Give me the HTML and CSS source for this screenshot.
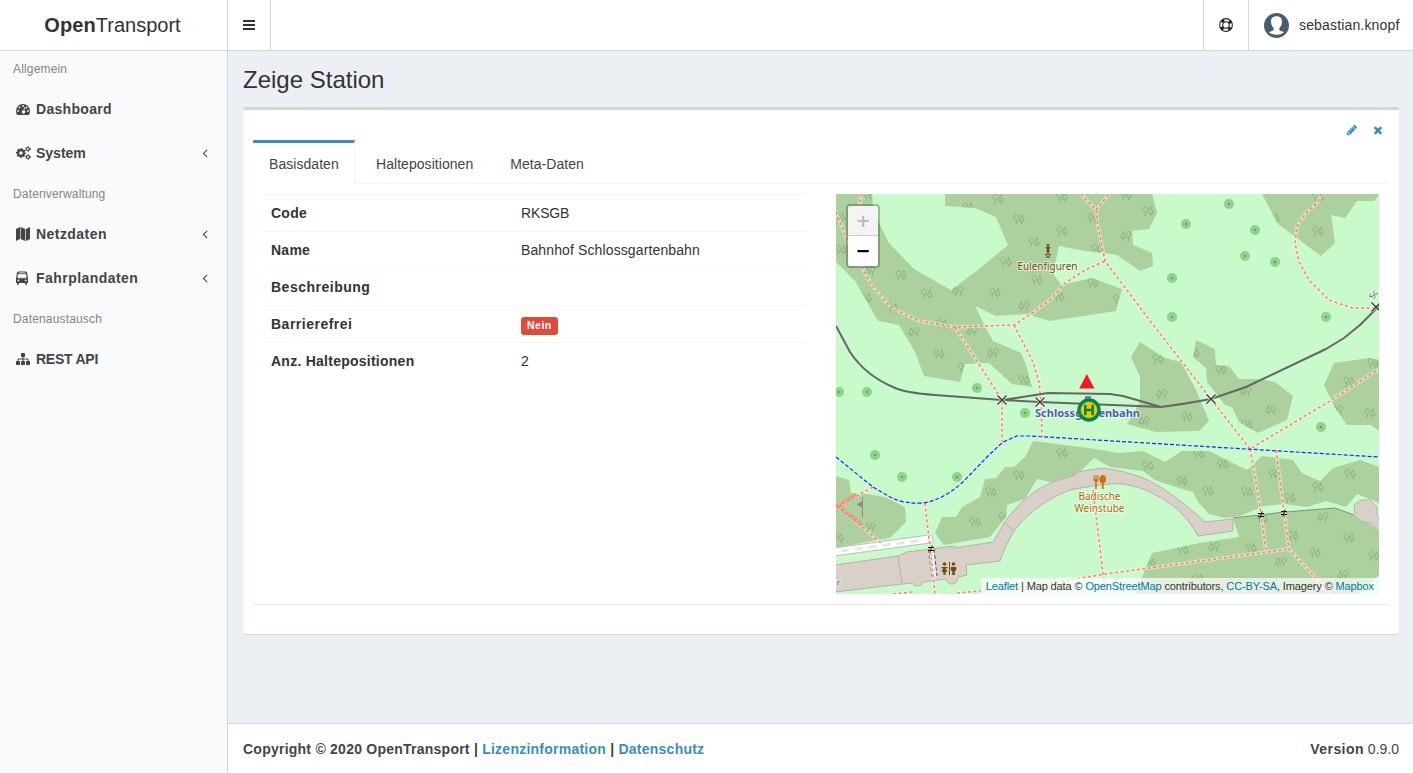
FILE: index.html
```html
<!DOCTYPE html>
<html lang="de">
<head>
<meta charset="utf-8">
<title>OpenTransport</title>
<link rel="stylesheet" href="styles.css">
</head>
<body>
<svg width="0" height="0" class="sprite">
  <defs>
    <symbol id="i-angle" viewBox="0 0 1792 1792"><path d="M1203 544q0 13-10 23l-393 393 393 393q10 10 10 23t-10 23l-50 50q-10 10-23 10t-23-10l-466-466q-10-10-10-23t10-23l466-466q10-10 23-10t23 10l50 50q10 10 10 23z"/></symbol>
    <symbol id="i-times" viewBox="0 0 1792 1792"><path d="M1490 1322q0 40-28 68l-136 136q-28 28-68 28t-68-28l-294-294-294 294q-28 28-68 28t-68-28l-136-136q-28-28-28-68t28-68l294-294-294-294q-28-28-28-68t28-68l136-136q28-28 68-28t68 28l294 294 294-294q28-28 68-28t68 28l136 136q28 28 28 68t-28 68l-294 294 294 294q28 28 28 68z"/></symbol>
    <symbol id="i-pencil" viewBox="0 0 1792 1792"><path d="M491 1536l91-91-235-235-91 91v107h128v128h107zm523-928q0-22-22-22-10 0-17 7l-542 542q-7 7-7 17 0 22 22 22 10 0 17-7l542-542q7-7 7-17zm-54-192l416 416-832 832h-416v-416zm683 96q0 53-37 90l-166 166-416-416 166-165q36-38 90-38 53 0 91 38l235 234q37 39 37 91z"/></symbol>
    <symbol id="i-sitemap" viewBox="0 0 1792 1792"><path d="M1792 1248v320q0 40-28 68t-68 28h-320q-40 0-68-28t-28-68v-320q0-40 28-68t68-28h96v-192h-512v192h96q40 0 68 28t28 68v320q0 40-28 68t-68 28h-320q-40 0-68-28t-28-68v-320q0-40 28-68t68-28h96v-192h-512v192h96q40 0 68 28t28 68v320q0 40-28 68t-68 28h-320q-40 0-68-28t-28-68v-320q0-40 28-68t68-28h96v-192q0-52 38-90t90-38h512v-192h-96q-40 0-68-28t-28-68v-320q0-40 28-68t68-28h320q40 0 68 28t28 68v320q0 40-28 68t-68 28h-96v192h512q52 0 90 38t38 90v192h96q40 0 68 28t28 68z"/></symbol>
    <symbol id="tA" viewBox="0 0 11 10"><path d="M3 5.8C.2 5.8.2 1 3 1s2.800 4.800 0 4.800V9.500M8 1L5.700 7h4.600zM8 7v2.500" fill="none" stroke="#8bb27d" stroke-width=".9"/></symbol>
    <symbol id="tB" viewBox="0 0 11 10"><path d="M8 5.800C5.200 5.800 5.200 1 8 1s2.800 4.800 0 4.800V9.500M3 1L.7 7h4.600zM3 7v2.500" fill="none" stroke="#8bb27d" stroke-width=".9"/></symbol>
  </defs>
</svg>
<header class="top">
  <div class="logo"><span><b>Open</b>Transport</span></div>
  <div class="toggle"><svg width="12" height="12" viewBox="0 0 12 12"><path d="M0 2h12M0 6h12M0 10h12" stroke="#333" stroke-width="2"/></svg></div>
  <div class="grow"></div>
  <div class="help"><svg width="14" height="14" viewBox="0 0 14 14" fill="none" stroke="#222"><circle cx="7" cy="7" r="6.400" stroke-width="1.100"/><circle cx="7" cy="7" r="3.300" stroke-width="1.100"/><circle cx="7" cy="7" r="4.900" stroke-width="3" stroke-dasharray="2.800 4.900" stroke-dashoffset="-2.450"/></svg></div>
  <div class="user">
    <svg width="25" height="25" viewBox="0 0 25 25"><circle cx="12.500" cy="12.500" r="12.500" fill="#4c5b72"/><path d="M12.500 3.200c3.900 0 5.600 2.400 5.500 5.500-.1 2.700-1 4.500-2.700 6.300v2c.8 1 3.300 1.300 4.700 2.200-1.900 1.700-4.500 2.500-7.500 2.500S6.900 20.900 5 19.200c1.400-.9 3.900-1.200 4.700-2.200v-2C8 13.200 7.100 11.400 7 8.700c-.1-3.100 1.600-5.500 5.500-5.500z" fill="#fff"/></svg>
    <span>sebastian.knopf</span>
  </div>
</header>
<div class="body">
  <aside class="side">
    <div class="head">Allgemein</div>
    <a class="item"><svg width="14" height="14" viewBox="0 0 14 14"><path d="M7 2a7 7 0 0 1 7 7c0 1.400-.4 2.700-1 3.700-.2.300-.4.300-.6.300H1.600c-.2 0-.4 0-.6-.3-.6-1-1-2.300-1-3.700a7 7 0 0 1 7-7z" fill="#444"/><g fill="#f9fafc"><circle cx="2" cy="9" r=".9"/><circle cx="3.500" cy="5.500" r=".9"/><circle cx="7" cy="4" r=".9"/><circle cx="10.500" cy="5.500" r=".9"/><circle cx="12" cy="9" r=".9"/><path d="M8.300 5.200l.8.200-.8 3.200a1.600 1.600 0 1 1-.9-.2z"/></g></svg><span>Dashboard</span></a>
    <a class="item"><svg width="15" height="14" viewBox="0 0 15 14" fill="none" stroke="#444"><circle cx="5" cy="7" r="2.900" stroke-width="2.200"/><circle cx="5" cy="7" r="4.300" stroke-width="1.500" stroke-dasharray="1.700 1.677" stroke-dashoffset=".85"/><circle cx="12" cy="3" r="1.500" stroke-width="1.200"/><circle cx="12" cy="3" r="2.400" stroke-width="1" stroke-dasharray="1.100 1.413"/><circle cx="12" cy="11" r="1.500" stroke-width="1.200"/><circle cx="12" cy="11" r="2.400" stroke-width="1" stroke-dasharray="1.100 1.413"/></svg><span class="tight">System</span><svg class="ang" width="14" height="14"><use href="#i-angle"/></svg></a>
    <div class="head">Datenverwaltung</div>
    <a class="item"><svg width="14" height="14" viewBox="0 0 14 14" fill="#444"><path d="M0 2L4 0v12L0 14zM4.600 0L9.300 2v12l-4.700-2zM10 2l4-2v12l-4 2z"/></svg><span class="wide">Netzdaten</span><svg class="ang" width="14" height="14"><use href="#i-angle"/></svg></a>
    <a class="item"><svg width="14" height="14" viewBox="0 0 14 14"><path d="M3 .5h6c1.300 0 2 .5 2.200 1.700L11.500 5l.5 2v5h-1v1.200c0 1-1.800 1-1.800 0V12H2.800v1.200c0 1-1.800 1-1.800 0V12H0V7l.5-2 .3-2.800C1 1 1.700.5 3 .5z" fill="#444"/><path d="M3 1.700h6M2.200 3.200h7.600l.4 3.600H1.800z" fill="#f9fafc" stroke="#f9fafc" stroke-width=".7"/><circle cx="2.400" cy="9.400" r=".9" fill="#f9fafc"/><circle cx="9.600" cy="9.400" r=".9" fill="#f9fafc"/></svg><span class="wide">Fahrplandaten</span><svg class="ang" width="14" height="14"><use href="#i-angle"/></svg></a>
    <div class="head">Datenaustausch</div>
    <a class="item"><svg width="14" height="14" fill="#444"><use href="#i-sitemap"/></svg><span class="narrow">REST API</span></a>
  </aside>
  <main class="main">
    <h1>Zeige Station</h1>
    <section class="box">
      <div class="tools"><svg width="12" height="12"><use href="#i-pencil"/></svg><svg width="12" height="12"><use href="#i-times"/></svg></div>
      <nav class="tabs"><a class="on">Basisdaten</a><a class="t2">Haltepositionen</a><a class="t3">Meta-Daten</a></nav>
      <div class="pane">
        <dl class="tbl">
          <div><dt>Code</dt><dd class="code">RKSGB</dd></div>
          <div><dt>Name</dt><dd>Bahnhof Schlossgartenbahn</dd></div>
          <div><dt class="wide">Beschreibung</dt><dd></dd></div>
          <div><dt class="wide">Barrierefrei</dt><dd><span class="label">Nein</span></dd></div>
          <div><dt>Anz. Haltepositionen</dt><dd>2</dd></div>
        </dl>
        <div class="map">
<svg width="543" height="400" viewBox="836 194 543 400">
  <defs>
    <path id="forest" d="M836 194H872L873 207 878 221 889 243 914 269 951 290 978 270 1008 245 996 217 975 208 945 206V194H1152L1157 213 1149 229 1132 231 1133 245 1152 253 1153 266 1140 271 1117 255 1104 253 1085 251 1059 246 1053 273 1061 285 1092 278 1122 289 1116 311 1050 321 1026 314 996 316 975 306 986 328 993 341 1021 353 1026 365 1032 387 1012 384 989 363 965 364 960 382 924 376 915 352 899 325 878 321 855 281 836 262Z
    M1262 194L1278 224 1321 256 1335 243 1331 215 1345 218 1357 201H1374L1379 195V194Z
    M1140 342L1131 357 1140 377V402L1127 424 1156 432 1199 431 1209 421 1196 390 1181 362 1165 358Z
    M1196 340L1193 357 1206 368 1207 382 1225 405 1232 407 1239 422 1258 433 1287 420 1293 396 1275 382 1258 379 1239 379 1229 366 1216 365 1215 349Z
    M1334 363L1369 358 1379 360V431L1371 425H1347L1335 408 1324 385Z
    M1033 441L1088 448 1119 453 1143 451 1165 462 1182 451H1209L1221 457 1247 470 1262 456 1293 460 1302 473 1320 481 1333 468 1360 460 1379 467V503L1357 494 1346 507 1326 501 1307 507 1285 504 1264 506 1240 516 1225 518 1209 514 1198 502 1193 492 1179 488 1155 480 1143 471 1110 467 1094 458 1085 467 1070 480 1050 482 1037 479 1025 499 1007 505 1006 517 990 537 944 545 935 533 942 517H956L962 507 980 497 985 479 996 478 1005 467H1014L1025 457Z
    M1233 518L1285 512 1335 508 1354 515 1379 530V575L1360 594H1135L1145 570 1152 553 1200 543 1239 537Z
    M836 476L849 480 851 493 867 494 885 497 905 507 906 522 890 538 872 541 836 548Z"/>
    <clipPath id="fc"><use href="#forest"/></clipPath>
    <g id="x"><path d="M-4.500-4.500l9 9M4.500-4.500l-9 9" stroke="#fff" stroke-opacity=".7" stroke-width="3"/><path d="M-4.500-4.500l9 9M4.500-4.500l-9 9" stroke="#333" stroke-width="1.300"/></g>
    <g id="gate"><path d="M-3-1.500h6M-3 1.500h6M1.200-3.500l-2.400 7" stroke="#111" stroke-width="1"/></g>
    <g id="c"><circle r="5" fill="#8ad58b"/><circle r="1" fill="#b06a30"/></g>
    <path id="foot" d="M836 212L847 240 862 267 871 284 890 307 919 321 955 327 1014 325 1031 314 1050 300 1064 284 1085 270 1105 261M862 194L859 206M1081 194L1096 210 1109 194M1096 210L1098 226 1105 261 1154 326 1211 399 1250 449 1330 401 1379 369M1250 449L1253 465 1261 514 1266 551M1276 450L1278 465 1284 512 1289 549 1330 594M957 593L1040 585 1105 574 1289 549M1093 490L1103 574 1106 594M955 327L1002 400V442M1014 325L1033 362 1039 382 1041 403 1042 436M1321 194L1318 202 1305 214 1297 226 1295 243 1299 262 1309 280 1329 300 1352 308H1379M873 487L838 506 881 543M925 503L930 547 935 594M893 594L913 592"/>
  </defs>
  <rect x="836" y="194" width="543" height="400" fill="#c8facc"/>
  <use href="#forest" fill="#add19e"/>
  <g clip-path="url(#fc)" id="trees"></g>
  <path d="M1233 518L1285 512 1335 508 1354 515" fill="none" stroke="#7d9374"/>
  <g fill="#d9d0c9" stroke="#bfada3" stroke-width="1">
    <path d="M835 565L898 556 907 552 954 546 955 548 993 542Q998 534 1004 523 1017 504 1037 490 1052 481 1075 475L1077 472 1102 468Q1128 471 1148 480 1175 494 1205 522L1233 519V531L1198 536Q1186 515 1172 505 1148 488 1128 485 1116 481 1070 490 1046 498 1023 520L1014 531Q1004 549 1000 561L966 565 967 575 958 577A6 6 0 0 1 946 579L923 582A6 6 0 0 1 912 583L902 584 835 592Z"/>
    <path d="M898 556L902 583M1004 523L1014 531" fill="none"/>
    <path d="M1361 500H1370L1377 507V515L1381 520V534L1370 523 1362 522 1355 516 1354 505Z"/>
  </g>
  <path d="M834 552L929 539" stroke="#bbb" stroke-width="9" stroke-linecap="round"/><path d="M834 552L929 539" stroke="#fff" stroke-width="7" stroke-linecap="round"/><path d="M841 551L925 540" stroke="#e6e6e6" stroke-width="3" stroke-dasharray="8 6"/>
  <path d="M931 548L934 577" stroke="#f2eeea" stroke-width="5"/>
  <path d="M928.500 549L932 577M934 549L937 576" stroke="#555" stroke-dasharray="4 2"/>
  <g fill="none" stroke-linejoin="round"><use href="#foot" stroke="#f5f0ea" stroke-opacity=".55" stroke-width="3.500"/><use href="#foot" stroke="#fa8072" stroke-width="1.500" stroke-dasharray="3 2.500"/>
  <path d="M856 495L838 506 862 525" stroke="#fa8072" stroke-width="4" stroke-dasharray="1.500 1"/>
  <path d="M836 457L873 487 890 497Q903 504 923 503 943 500 963 482L988 456 1003 442 1017 436H1030L1379 457" stroke="#2323ff" stroke-width="1.200" stroke-dasharray="4 2"/>
  <path d="M836 326L850 352Q865 375 893 387 905 393 935 395L1002 400 1040 402 1161 407Q1185 404 1211 399L1246 387 1326 349 1344 338 1360 325 1379 306M1002 400L1016 398 1048 393 1110 394 1123 396 1161 407" stroke="#666" stroke-width="2"/></g>
  <use href="#x" x="1002" y="400"/><use href="#x" x="1040" y="402"/><use href="#x" x="1211" y="399"/><use href="#x" x="1376" y="307"/>
  <use href="#gate" x="1261" y="515"/><use href="#gate" x="1284" y="513"/><use href="#gate" x="931" y="549"/>
  <g id="circles"></g>
  <path d="M862.500 497v20" stroke="#8d8c91"/><path d="M862.500 501v7l-6-3.500z" fill="#8d8c91"/>
  <g class="maplabel">
    <text x="1047.500" y="270" textLength="60" fill="#734a08">Eulenfiguren</text>
    <text x="1099.500" y="500" textLength="42" fill="#b46700">Badische</text>
    <text x="1099.500" y="512" textLength="50" fill="#b46700">Weinstube</text>
    <text x="1087.500" y="417" textLength="105" lengthAdjust="spacingAndGlyphs" class="stn" fill="#4d5db0">Schlossgartenbahn</text>
    <text x="1376" y="296" transform="rotate(-60 1376 296)" fill="#555" class="street">Sc</text>
    <text x="838.500" y="586" fill="#555" class="street">r</text>
  </g>
  <g fill="#734a08"><circle cx="1048" cy="245.300" r="1.400"/><path d="M1045.700 247h4.600v1.200h-1v5h-2.600v-5h-1zM1044.800 254h6.400v1.300h-6.400zM1046 256.500h4v1.200h-4z"/>
  <circle cx="944.500" cy="564" r="1.800"/><path d="M941.500 567h6v1.300h-2l2 3.500h-2v3h-2.200v-3h-2l2-3.500h-1.800zM949 562h1v13h-1z"/><circle cx="953.500" cy="564" r="1.800"/><path d="M950.800 567h5.500v3l-1.500 1v4h-2.500v-4l-1.500-1z"/></g>
  <g fill="#c77400"><path d="M1093.500 475v4.500q0 2 1.700 2.200V489h1.600v-7.300q1.700-.2 1.700-2.200V475h-1v4h-1v-4h-1v4h-1v-4zM1102.800 475c4.200 0 4.200 8 .8 8.300V489h-1.700v-5.700c-3.400-.3-3.300-8.300.9-8.300z"/></g>
  <rect x="1085" y="396" width="6" height="6" fill="#7981b0"/>
  <path d="M1086.800 374L1094.500 388.500H1079.200z" fill="#ee1d23"/>
  <circle cx="1089" cy="410" r="10" fill="#f2c500" stroke="#008556" stroke-width="3.400"/>
  <path d="M1085.300 404.800v10.400M1092.700 404.800v10.400M1085.300 410h7.400" stroke="#008556" stroke-width="2.500"/>
</svg>
          <div class="zoom"><span class="in">+</span><span>−</span></div>
          <div class="attr"><a>Leaflet</a> | Map data © <a>OpenStreetMap</a> contributors, <a>CC-BY-SA</a>, Imagery © <a>Mapbox</a></div>
        </div>
      </div>
    </section>
    <footer class="foot"><b>Copyright © 2020 OpenTransport | <a>Lizenzinformation</a> | <a>Datenschutz</a></b><span><b class="v">Version</b> 0.9.0</span></footer>
  </main>
</div>
<script src="map.js"></script>
</body>
</html>
```
FILE: styles.css
```css
* { box-sizing: border-box; }
body { margin: 0; height: 773px; overflow: hidden; display: flex; flex-direction: column; font: 14px/20px "Liberation Sans", Arial, sans-serif; color: #333; background: #ecf0f5; }
a { color: #3c8dbc; }
b { letter-spacing: .24px; }
dt { letter-spacing: .25px; }
dt.wide { letter-spacing: .5px; }
svg { display: block; flex: none; }
.sprite { position: absolute; }
.top { display: flex; height: 51px; background: #fff; border-bottom: 1px solid #d2d6de; flex: none; }
.top > div { display: flex; align-items: center; }
.top .logo { width: 228px; justify-content: center; font-size: 20px; border-right: 1px solid #d2d6de; padding-right: 2px; }
.logo b { letter-spacing: .1px; }
.top .toggle { width: 43px; padding-left: 15px; border-right: 1px solid #d2d6de; }
.grow { flex: 1; }
.top .help { width: 46px; justify-content: center; border-left: 1px solid #d2d6de; border-right: 1px solid #d2d6de; }
.top .user { width: 164px; padding-left: 15px; gap: 10px; letter-spacing: .16px; }
.body { flex: 1; display: flex; min-height: 0; }
.side { width: 228px; flex: none; background: #f9fafc; border-right: 1px solid #d2d6de; }
.head { height: 37px; padding: 9px 13px; font-size: 12px; line-height: 18px; color: #848484; letter-spacing: .16px; }
.item { height: 44px; padding: 0 15px 2px 16px; display: flex; align-items: center; gap: 6px; color: #444; font-weight: bold; letter-spacing: .3px; }
.item .tight { margin-left: -1px; letter-spacing: 0; }
.item .wide { letter-spacing: .45px; }
.item .narrow { letter-spacing: -.25px; }
.ang { margin-left: auto; fill: #444; }
.main { flex: 1; display: flex; flex-direction: column; min-width: 0; }
h1 { margin: 15px 15px 14px; font-size: 24px; line-height: 27px; font-weight: normal; }
.box { margin: 0 14px 0 15px; height: 527px; background: #fff; border-top: 3px solid #d2d6de; border-radius: 3px; padding: 0 11px 0 10px; box-shadow: 0 1px 1px rgba(0,0,0,.1); }
.tools { height: 30px; display: flex; justify-content: flex-end; gap: 14px; padding: 14px 4px 0 0; fill: #3c8dbc; }
.tabs { height: 44px; display: flex; border-bottom: 1px solid #f4f4f4; }
.tabs a { color: #444; padding: 14px 16px 0; letter-spacing: .05px; }
.tabs .on { height: 44px; width: 102px; padding-top: 11px; border-top: 3px solid #3c8dbc; border-right: 1px solid #f4f4f4; background: #fff; }
.tabs .t2, .tabs .t3 { margin-left: 5px; }
.pane { height: 421px; border-bottom: 1px solid #e7e7e7; padding: 10px 9px 0 10px; display: flex; justify-content: space-between; }
.tbl { margin: 0; width: 543px; }
.tbl div { height: 37px; border-top: 1px solid #f4f4f4; padding: 8px; display: flex; }
dt { width: 250px; font-weight: bold; }
dd { margin: 0; letter-spacing: .12px; }
dd.code { letter-spacing: -.15px; }
.label { display: inline-block; margin-top: 3px; background: #dd4b39; color: #fff; font-weight: bold; font-size: 10.5px; line-height: 17px; height: 18px; border-radius: 3px; padding: 0 6px; letter-spacing: .5px; vertical-align: top; }
.map { width: 543px; height: 400px; position: relative; overflow: hidden; }
.maplabel { font: 10px "Noto Sans", sans-serif; text-anchor: middle; paint-order: stroke; stroke: rgba(255,255,255,.6); stroke-width: 2px; stroke-linejoin: round; }
.maplabel .stn { font-weight: bold; }
.maplabel .street { font-size: 8.5px; }
.zoom { position: absolute; left: 10px; top: 10px; width: 34px; height: 64px; border: 2px solid rgba(0,0,0,.25); background-clip: padding-box; border-radius: 4px; font: bold 18px/30px "DejaVu Sans", sans-serif; text-align: center; color: #000; }
.zoom span { display: block; height: 30px; background: #fff; border-radius: 0 0 2px 2px; }
.zoom .in { background: #f4f4f4; color: #bbb; border-bottom: 1px solid #ccc; border-radius: 2px 2px 0 0; }
.attr { position: absolute; right: 0; bottom: 0; height: 16px; padding: 0 5px; background: rgba(255,255,255,.7); font-size: 11px; line-height: 16px; white-space: nowrap; letter-spacing: -.12px; }
.attr a { color: #0078a8; }
.foot { margin-top: auto; height: 50px; padding: 0 14px 0 15px; background: #fff; border-top: 1px solid #d2d6de; display: flex; align-items: center; justify-content: space-between; color: #444; }
.foot .v { letter-spacing: .45px; }
```
FILE: map.js
```js
// Forest symbols: A = broadleaf then conifer, B = conifer then broadleaf
const A = "869,196 998,199 968,207 1019,219 840,217 841,250 901,275 927,294 1006,262 995,293 866,298 893,308 942,324 1062,197 1126,195 1093,218 1148,211 1062,231 1034,242 1097,249 1037,280 1093,283 1059,297 1119,299 1318,197 1318,231 1274,218 939,354 964,368 1024,380 1158,359 1187,417 1062,453 1194,353 1148,466 1221,370 1247,425 1349,382 1373,363 1370,413 1199,454 1223,464 1019,475 991,492 975,522 838,538 1004,517 1182,481 1208,491 1247,492 1274,474 1290,498 1318,487 1350,474 1349,538 1293,536 1262,518 1315,553 1251,548 1183,550 1150,563 1198,579 1374,556 1225,584";
const B = "870,271 958,291 1024,306 1126,236 914,332 972,331 993,353 1162,394 1144,421 1246,391 1271,410 1338,410 870,527 1323,517 1281,562 1214,547 1343,575";
const C = "1229,204 1255,230 1245,256 1275,262 1326,317 1186,224 1172,278 1172,317 839,392 867,392 977,388 875,455 902,477 957,477 1025,413 1321,427";
const pts = s => s.split(" ").map(p => p.split(",").map(Number));
const tree = id => ([x, y]) => `<use href="#${id}" x="${x - 6}" y="${y - 5.5}" width="12" height="11"/>`;
document.getElementById("trees").innerHTML = pts(A).map(tree("tA")).join("") + pts(B).map(tree("tB")).join("");
document.getElementById("circles").innerHTML = pts(C).map(([x, y]) => `<use href="#c" x="${x}" y="${y}"/>`).join("");
```
